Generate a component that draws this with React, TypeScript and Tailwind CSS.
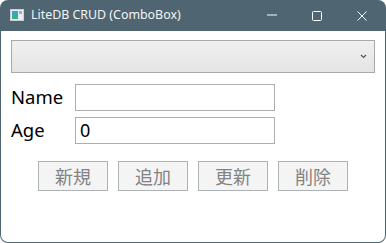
import React from "react";

export default function App() {
  return (
    <div className="w-[386px] h-[243px] bg-white">
      <div className="w-[386px] h-[243px] rounded-[8px] bg-[#4f6571] px-[1px] pb-[1px] flex flex-col">
        <div className="h-[31px] flex items-center relative shrink-0">
          <svg className="absolute left-[9px] top-[9px]" width="14" height="12" viewBox="0 0 14 12">
            <rect x="0.5" y="0.5" width="13" height="11" fill="#e9ecee" stroke="#c9cfd3" />
            <defs>
              <linearGradient id="g" x1="0" y1="0" x2="0" y2="1">
                <stop offset="0" stopColor="#3aa0d8" />
                <stop offset="1" stopColor="#3bb27a" />
              </linearGradient>
            </defs>
            <rect x="2" y="2" width="6" height="8" fill="url(#g)" />
            <rect x="9" y="2" width="3" height="3" fill="#9fb0ba" />
          </svg>
          <span
            className="absolute left-[30px] top-[7px] text-[12.4px] leading-[16px] text-[#f3f5f6]"
            style={{ fontFamily: '"Segoe UI", "Noto Sans", sans-serif' }}
          >
            LiteDB CRUD (ComboBox)
          </span>
          <svg className="absolute left-[265px] top-[14px]" width="12" height="2" viewBox="0 0 12 2">
            <line x1="1" y1="1" x2="11" y2="1" stroke="#ffffff" strokeWidth="1" />
          </svg>
          <svg className="absolute left-[310px] top-[10px]" width="12" height="12" viewBox="0 0 12 12">
            <rect x="1.5" y="1.5" width="9" height="9" rx="1" fill="none" stroke="#ffffff" strokeWidth="1" />
          </svg>
          <svg className="absolute left-[355px] top-[10px]" width="12" height="12" viewBox="0 0 12 12">
            <path d="M1.5 1.5 L10.5 10.5 M10.5 1.5 L1.5 10.5" stroke="#ffffff" strokeWidth="1" />
          </svg>
        </div>
        <div
          className="flex-1 bg-white rounded-b-[7px] pt-[9px] px-[10px]"
          style={{ fontFamily: '"Segoe UI", "Noto Sans", "Noto Sans CJK JP", sans-serif' }}
        >
          <div className="h-[33px] w-[364px] border border-[#a9a9a9] bg-gradient-to-b from-[#f0f0f0] to-[#e4e4e4] flex items-center justify-end pr-[7px]">
            <svg width="7" height="5" viewBox="0 0 7 5">
              <path d="M1 1 L3.5 3.5 L6 1" fill="none" stroke="#555" strokeWidth="1.2" />
            </svg>
          </div>
          <div className="mt-[10px] flex items-center h-[28px]">
            <span className="w-[64px] text-[18.5px] leading-[24px] text-black">Name</span>
            <div className="w-[200px] h-[27px] border border-[#abadb3] bg-white" />
          </div>
          <div className="mt-[5px] flex items-center h-[28px]">
            <span className="w-[64px] text-[18.5px] leading-[24px] text-black">Age</span>
            <div className="w-[200px] h-[27px] border border-[#abadb3] bg-white flex items-center pl-[4px] text-[18px] leading-[24px] text-black">
              0
            </div>
          </div>
          <div className="mt-[17px] flex gap-[10px] pl-[27px]">
            {["新規", "追加", "更新", "削除"].map((t) => (
              <div
                key={t}
                className="w-[70px] h-[30px] border border-[#adb2b5] bg-[#f4f4f4] flex items-center justify-center text-[18px] leading-[24px] text-[#838383]"
                style={{ fontFamily: '"Noto Sans CJK JP", sans-serif' }}
              >
                {t}
              </div>
            ))}
          </div>
        </div>
      </div>
    </div>
  );
}
